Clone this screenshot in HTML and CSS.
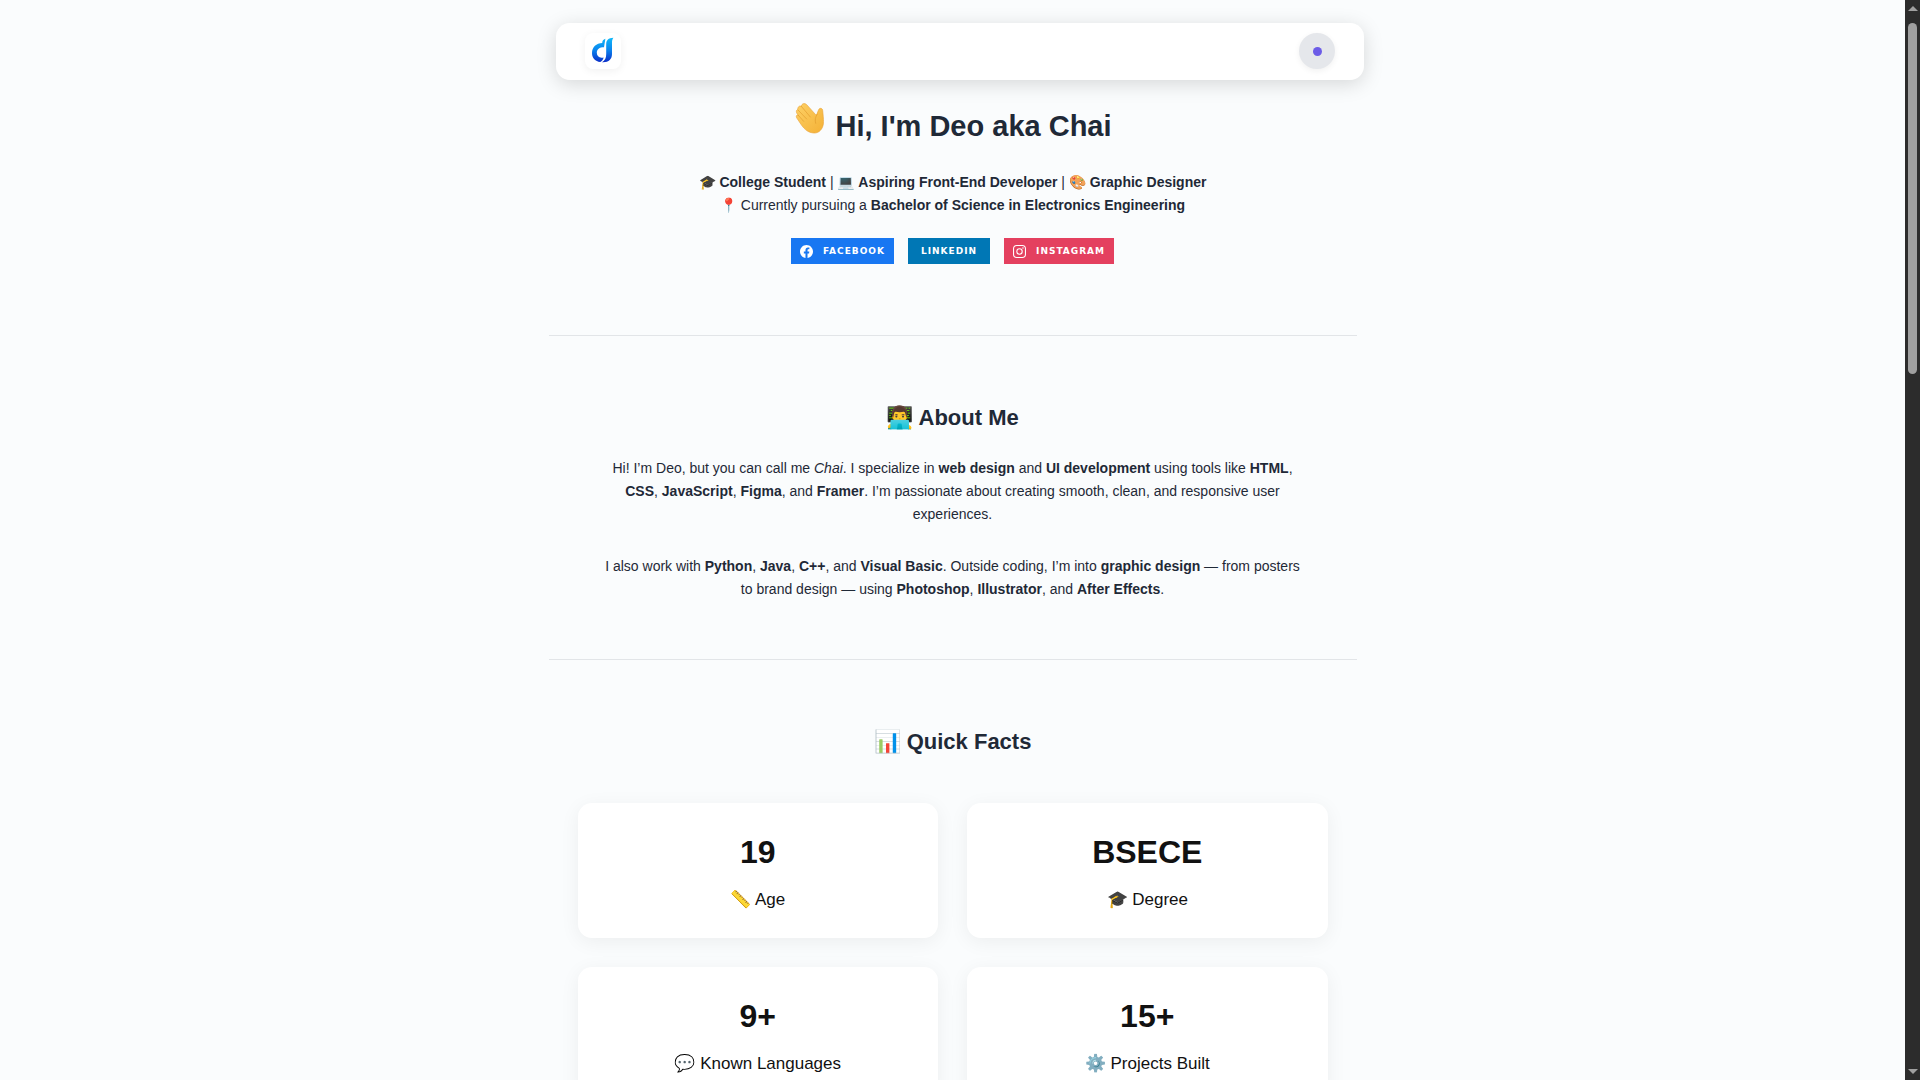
FILE: index.html
```html
<!DOCTYPE html>
<html lang="en">
<head>
<meta charset="utf-8">
<meta name="viewport" content="width=device-width, initial-scale=1">
<title>Deo aka Chai</title>
<link rel="stylesheet" href="styles.css">
</head>
<body>
<header class="navbar">
  <a class="logo" href="#home" aria-label="Home">
    <svg viewBox="0 1 24 28" width="24" height="28" aria-hidden="true">
      <defs>
        <linearGradient id="ink" gradientUnits="userSpaceOnUse" x1="0" y1="2" x2="0" y2="26">
          <stop offset="0" stop-color="#10b8f8"/>
          <stop offset=".5" stop-color="#0a84ee"/>
          <stop offset="1" stop-color="#0a2fc8"/>
        </linearGradient>
      </defs>
      <path fill="url(#ink)" d="M14.4 2.8C12.2 3.6 11.3 4.8 11.2 7C5.4 7.2 1 11 1 17C1 22.4 4.4 25.4 9.2 26C11 25 12.2 23.4 12.6 21.4C8.6 22.4 5.8 20.4 5.8 16.8C5.8 13.2 8.4 11.2 13 11.2Z"/>
      <path fill="url(#ink)" d="M22.4 1.8C17.4 2 15.2 4 15.2 8.4V18C15.2 21.8 14 24.6 11 26.2C17.6 26.6 21 23.4 21 18V7.2C21 5 21.2 3.4 22.4 1.8Z"/>
    </svg>
  </a>
  <button class="menu" type="button" aria-label="Menu"><span class="menu-dot"></span></button>
</header>

<main class="page">
  <section class="section hero" id="home">
    <h1 class="title"><svg class="wave" viewBox="21 21 102 93" width="34" height="31" role="img" aria-label="Waving hand">
      <defs>
        <linearGradient id="skin" x1="0" y1="0" x2="1" y2="1">
          <stop offset="0" stop-color="#fdd065"/>
          <stop offset="1" stop-color="#f4b136"/>
        </linearGradient>
      </defs>
      <path fill="url(#skin)" stroke="#eaa53a" stroke-width="2" stroke-linejoin="round" d="M47 88L33 67C28 60 33 55 37 58C29 49 30 42 35 41C35 33 40 28 46 31C47 23 55 20 62 26L89 56C91 57 93 55 94 51L98 41C101 35 109 36 110 43L111 54C112 66 113 74 112 84C110 99 99 112 84 111C66 110 56 100 47 88Z"/>
      <path fill="none" stroke="#e19b2c" stroke-width="2" stroke-linecap="round" d="M37 58L53 76M36 42L62 69M46 31L73 63M94 54C88 63 86 72 89 82"/>
    </svg> Hi, I'm Deo aka Chai</h1>
    <p class="text">🎓 <strong>College Student</strong> | 💻 <strong>Aspiring Front-End Developer</strong> | 🎨 <strong>Graphic Designer</strong><br>📍 Currently pursuing a <strong>Bachelor of Science in Electronics Engineering</strong></p>
    <div class="badges">
      <a class="badge facebook" href="#facebook">
        <svg viewBox="0 0 24 24" width="13" height="13" aria-hidden="true"><path fill="#fff" d="M24 12.07C24 5.41 18.63 0 12 0S0 5.4 0 12.07C0 18.1 4.39 23.1 10.13 24v-8.44H7.08v-3.49h3.04V9.41c0-3.02 1.8-4.7 4.54-4.7 1.31 0 2.68.24 2.68.24v2.97h-1.5c-1.5 0-1.96.93-1.96 1.89v2.26h3.32l-.53 3.5h-2.8V24C19.62 23.1 24 18.1 24 12.07"/></svg>
        Facebook</a>
      <a class="badge linkedin" href="#linkedin">LinkedIn</a>
      <a class="badge instagram" href="#instagram">
        <svg viewBox="0 0 24 24" width="13" height="13" fill="none" stroke="#fff" stroke-width="2" aria-hidden="true"><rect x="1" y="1" width="22" height="22" rx="6"/><circle cx="12" cy="12" r="5"/><circle cx="18.4" cy="5.6" r="1.4" fill="#fff" stroke="none"/></svg>
        Instagram</a>
    </div>
  </section>

  <section class="section" id="about">
    <h2 class="heading">👨‍💻 About Me</h2>
    <p class="text">Hi! I’m Deo, but you can call me <em>Chai</em>. I specialize in <strong>web design</strong> and <strong>UI development</strong> using tools like <strong>HTML</strong>, <strong>CSS</strong>, <strong>JavaScript</strong>, <strong>Figma</strong>, and <strong>Framer</strong>. I’m passionate about creating smooth, clean, and responsive user experiences.</p>
    <p class="text">I also work with <strong>Python</strong>, <strong>Java</strong>, <strong>C++</strong>, and <strong>Visual Basic</strong>. Outside coding, I’m into <strong>graphic design</strong> — from posters to brand design — using <strong>Photoshop</strong>, <strong>Illustrator</strong>, and <strong>After Effects</strong>.</p>
  </section>

  <section class="section" id="facts">
    <h2 class="heading">📊 Quick Facts</h2>
    <div class="facts">
      <article class="card"><h3 class="value">19</h3><p class="label">📏 Age</p></article>
      <article class="card"><h3 class="value">BSECE</h3><p class="label">🎓 Degree</p></article>
      <article class="card"><h3 class="value">9+</h3><p class="label">💬 Known Languages</p></article>
      <article class="card"><h3 class="value">15+</h3><p class="label">⚙️ Projects Built</p></article>
    </div>
  </section>
</main>

<div class="scrollbar" aria-hidden="true">
  <span class="arrow arrow-up"></span>
  <span class="thumb"></span>
  <span class="arrow arrow-down"></span>
</div>
</body>
</html>
```

FILE: styles.css
```css
* {
  box-sizing: border-box;
  margin: 0;
}

html {
  scrollbar-width: none;
}

body {
  padding-right: 15px;
  background: #fafcfd;
  color: #1f2937;
  font-family: "Liberation Sans", Arial, sans-serif;
  font-size: 14px;
  line-height: 23px;
}

/* Floating bar */
.navbar {
  position: fixed;
  top: 23px;
  left: 0;
  right: 0;
  z-index: 2;
  display: flex;
  align-items: center;
  justify-content: space-between;
  max-width: 808px;
  margin: 0 auto;
  padding: 10px 29px 11px;
  border-radius: 14px;
  background: #fff;
  box-shadow: 0 4px 20px rgba(0, 0, 0, .15);
}

.logo {
  display: grid;
  place-items: center;
  width: 36px;
  height: 36px;
  border-radius: 8px;
  background: #fff;
  box-shadow: 0 2px 8px rgba(0, 0, 0, .06);
}

.menu {
  display: grid;
  place-items: center;
  width: 36px;
  height: 36px;
  padding: 0;
  border: 0;
  border-radius: 50%;
  background: #e5e7eb;
  box-shadow: 0 2px 6px rgba(0, 0, 0, .06);
}

.menu-dot {
  width: 9px;
  height: 9px;
  border-radius: 50%;
  background: #6c5ce7;
}

/* Sections */
.page {
  max-width: 808px;
  margin: 0 auto;
}

.section {
  padding: 64px 29px 58px;
  text-align: center;
}

.section + .section {
  border-top: 1px solid #e2e5e8;
}

.hero {
  padding-top: 101px;
  padding-bottom: 71px;
}

.title {
  margin-bottom: 20px;
  font-size: 29px;
  line-height: 50px;
}

.wave {
  vertical-align: 2px;
}

.heading {
  margin-bottom: 21px;
  font-size: 22px;
  line-height: 36px;
}

.text {
  padding: 0 24px;
}

.text + .text {
  margin-top: 29px;
}

.badges {
  display: flex;
  justify-content: center;
  gap: 14px;
  margin-top: 21px;
}

.badge {
  display: flex;
  align-items: center;
  gap: 10px;
  height: 26px;
  padding: 0 9px;
  color: #fff;
  font: bold 9px/26px "DejaVu Sans", Verdana, sans-serif;
  letter-spacing: 1px;
  text-decoration: none;
  text-transform: uppercase;
}

.facebook {
  background: #1877f2;
}

.linkedin {
  padding: 0 13px;
  background: #0077b5;
}

.instagram {
  background: #e4405f;
}

/* Fact cards */
.facts {
  display: grid;
  grid-template-columns: 1fr 1fr;
  gap: 29px;
  margin-top: 43px;
}

.card {
  padding: 24px 24px 25px;
  border-radius: 14px;
  background: #fff;
  color: #111;
  box-shadow: 0 4px 20px rgba(0, 0, 0, .06);
}

.value {
  margin-bottom: 8px;
  font-size: 32px;
  line-height: 51px;
}

.label {
  font-size: 17px;
  line-height: 27px;
}

/* Window scrollbar */
.scrollbar {
  position: fixed;
  top: 0;
  right: 0;
  bottom: 0;
  z-index: 3;
  display: flex;
  flex-direction: column;
  align-items: center;
  width: 15px;
  padding: 6px 0;
  background: #2c2c2c;
}

.thumb {
  width: 9px;
  height: 351px;
  margin-top: 12px;
  border-radius: 5px;
  background: #a0a0a0;
}

.arrow {
  border: 5px solid transparent;
}

.arrow-up {
  border-top: 0;
  border-bottom-color: #a0a0a0;
}

.arrow-down {
  margin-top: auto;
  border-bottom: 0;
  border-top-color: #a0a0a0;
}
```
